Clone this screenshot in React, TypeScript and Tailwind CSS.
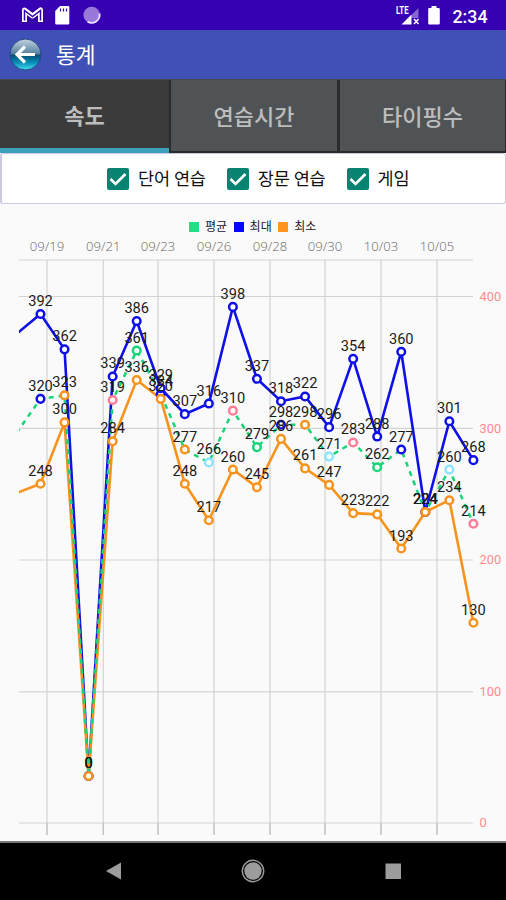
import React from "react";

const FONT = "font-['Roboto','Noto_Sans_CJK_KR',sans-serif]";
const GREEN = "#18d477";
const BLUE = "#0f0fe8";
const ORANGE = "#f7931c";
const PINK = "#fd7c96";
const CYAN = "#8ce4fd";

const MAX = [392, 362, 0, 339, 386, 329, 307, 316, 398, 337, 318, 322, 296, 354, 288, 360, 224, 301, 268];
const AVG = [320, 323, 0, 319, 361, 324, 277, 266, 310, 279, 298, 298, 271, 283, 262, 277, 224, 260, 214];
const MIN = [248, 300, 0, 284, 336, 320, 248, 217, 260, 245, 286, 261, 247, 223, 222, 193, 224, 234, 130];
const AVG_DOTS = [BLUE, ORANGE, CYAN, PINK, "#18d477"];

const DATES: [number, string][] = [
  [47, "09/19"], [103.3, "09/21"], [158, "09/23"], [214, "09/26"],
  [270, "09/28"], [325, "09/30"], [381, "10/03"], [437, "10/05"],
];
const LEVELS: [number, string][] = [[296.5, "400"], [428.3, "300"], [560, "200"], [691.8, "100"], [823, "0"]];

const px = (i: number) => 40.5 + i * 24.05;
const py = (v: number) => 776 - v * 1.1786;
const line = (data: number[], start: number) =>
  `16.5,${start} ` + data.map((v, i) => `${px(i)},${py(v)}`).join(" ");

function Series({ data, start, color, dashed }: { data: number[]; start: number; color: string; dashed?: boolean }) {
  return (
    <polyline
      points={line(data, start)}
      fill="none"
      stroke={color}
      strokeWidth={dashed ? 2.5 : 2.6}
      strokeDasharray={dashed ? "5 5" : undefined}
    />
  );
}

function Dots({ data, colors }: { data: number[]; colors: string[] }) {
  return (
    <g fill="#fff" strokeWidth="2.5">
      {data.map((v, i) => (
        <circle key={i} cx={px(i)} cy={py(v)} r="3.8" stroke={colors[i % colors.length]} />
      ))}
    </g>
  );
}

function Values({ data }: { data: number[] }) {
  return (
    <g fill="#1a1a1a" fontSize="14.6" textAnchor="middle">
      {data.map((v, i) => (
        <text key={i} x={px(i)} y={py(v) - 8}>{v}</text>
      ))}
    </g>
  );
}

function Chart() {
  return (
    <svg width="506" height="603" viewBox="0 238 506 603" className="block">
      <defs>
        <clipPath id="plot"><rect x="19" y="250" width="465" height="590" /></clipPath>
      </defs>
      <g stroke="#d3d3d3" strokeWidth="1.2">
        <line x1="19" x2="473" y1="260" y2="260" />
        {LEVELS.map(([y]) => <line key={y} x1="19" x2="473" y1={y} y2={y} />)}
        {DATES.map(([x]) => <line key={x} x1={x} x2={x} y1="260" y2="835" />)}
      </g>
      <g stroke="#c2c2c2" strokeWidth="1.2">
        {DATES.map(([x]) => <line key={x} x1={x} x2={x} y1="823" y2="835" />)}
      </g>
      <g fill="#666" fontSize="13.4" fontWeight="300" textAnchor="middle" className="font-['Open_Sans',sans-serif]">
        {DATES.map(([x, label]) => (
          <text key={label} x={x} y="251.3" textLength="34.5" lengthAdjust="spacingAndGlyphs">{label}</text>
        ))}
      </g>
      <g fill="#ff8a8a" fontSize="12.8">
        {LEVELS.map(([y, label]) => <text key={label} x="479.5" y={y + 4.3}>{label}</text>)}
      </g>
      <g clipPath="url(#plot)">
        <Series data={MAX} start={334} color={BLUE} />
        <Series data={MIN} start={493} color={ORANGE} />
        <Series data={AVG} start={433} color={GREEN} dashed />
      </g>
      <Dots data={AVG} colors={AVG_DOTS} />
      <Dots data={MAX} colors={[BLUE]} />
      <Dots data={MIN} colors={[ORANGE]} />
      <Values data={AVG} />
      <Values data={MAX} />
      <Values data={MIN} />
    </svg>
  );
}

function StatusBar() {
  return (
    <div className="flex h-[30px] items-center bg-[#3700b3]">
      <svg width="506" height="30" viewBox="0 0 506 30" fill="#fff">
        <path d="M24.500 22V10l8 6 8-6v12" fill="none" stroke="#fff" strokeWidth="5" strokeLinejoin="round" />
        <path d="M24.500 20.500V10.500l8 6 8-6v10" fill="none" stroke="#3700b3" strokeWidth="1.500" />
        <path d="M60 6h8q1.300 0 1.300 1.300v16q0 1.300-1.300 1.300H56.500q-1.300 0-1.300-1.300V11z" />
        <path d="M60.500 8.500v3M63.500 8.500v3M66.500 8.500v3" stroke="#3700b3" strokeWidth="1.200" />
        <circle cx="91.700" cy="15" r="8.300" fill="#9878d8" />
        <path d="M99.500 13.500a8 8 0 0 1-12 8.200" fill="none" stroke="#eee6fc" strokeWidth="1.800" />
        <text x="396" y="14" fontSize="10.500" fontWeight="700" textLength="12.500" lengthAdjust="spacingAndGlyphs">LTE</text>
        <path d="M418.500 8v10h-7v-3z" opacity=".4" />
        <path d="M411.500 14.500v10H401.500z" />
        <path d="m414 19 4.500 5m0-5-4.500 5" stroke="#fff" strokeWidth="1.500" />
        <path d="M431.500 6h5v2h2q1.300 0 1.300 1.300v14q0 1.300-1.300 1.300h-9q-1.300 0-1.300-1.300v-14q0-1.300 1.300-1.300h2z" />
        <text x="452.500" y="22.600" fontSize="19" fontWeight="500" textLength="35" lengthAdjust="spacingAndGlyphs">2:34</text>
      </svg>
    </div>
  );
}

function TitleBar() {
  return (
    <header className="flex h-[49px] items-center bg-[#3f51b5] pl-[9px] text-white">
      <svg width="33" height="33" viewBox="0 0 33 33">
        <defs>
          <linearGradient id="orb" x1="0" y1="0" x2="0" y2="1">
            <stop offset="0" stopColor="#c3d3df" />
            <stop offset=".48" stopColor="#5680a0" />
            <stop offset=".52" stopColor="#075077" />
            <stop offset=".75" stopColor="#078bb5" />
            <stop offset="1" stopColor="#44dcee" />
          </linearGradient>
        </defs>
        <circle cx="16.500" cy="16.500" r="15.500" fill="url(#orb)" stroke="#254783" strokeWidth="1" />
        <path d="M26 16.500H8M16 8.500 8 16.500l8 8" fill="none" stroke="#fff" strokeWidth="3.200" />
      </svg>
      <h1 className="ml-[14px] pt-[3px] text-[21.5px] leading-none">통계</h1>
    </header>
  );
}

function Tabs() {
  return (
    <nav className="flex h-[74px] border-t border-[#44474b] bg-[#292b2c] text-[22px] leading-none text-[#bdbdbd]">
      <button className="flex w-[169px] items-center justify-center border-b-[5px] border-[#3ba1bd] bg-[#3b3b3b] pt-[6px] font-bold">속도</button>
      <button className="mb-[2px] ml-[2px] flex w-[166px] items-center justify-center bg-[#505355] pt-[4px] font-medium">연습시간</button>
      <button className="mb-[2px] ml-[3px] flex w-[165px] items-center justify-center bg-[#505355] pt-[4px] font-medium">타이핑수</button>
    </nav>
  );
}

function Check({ label }: { label: string }) {
  return (
    <label className="flex items-center gap-[9px]">
      <svg width="22" height="22" viewBox="0 0 22 22">
        <rect width="22" height="22" rx="2" fill="#078372" />
        <path d="m3.500 11 5 5L18.500 6" fill="none" stroke="#fff" strokeWidth="2.600" />
      </svg>
      <span className="whitespace-nowrap pt-[2px] text-[17.5px] leading-none tracking-[-0.2px]">{label}</span>
    </label>
  );
}

const LEGEND: [string, string][] = [["평균", "#1ce286"], ["최대", "#0808f8"], ["최소", "#ff951e"]];

export default function App() {
  return (
    <div className={`flex h-[900px] w-[506px] flex-col overflow-hidden bg-[#fafafa] ${FONT}`}>
      <StatusBar />
      <TitleBar />
      <Tabs />
      <section className="flex h-[51px] items-center gap-[21px] rounded-[3px] border border-l-2 border-[#c9cae0] bg-white pl-[105px] text-[#111]">
        <Check label="단어 연습" />
        <Check label="장문 연습" />
        <Check label="게임" />
      </section>
      <div className="flex h-[34px] items-end gap-[6.5px] pb-[5px] pl-[189px] text-[12px] leading-none text-[#222]">
        {LEGEND.map(([label, color]) => (
          <span key={label} className="flex items-center gap-[6px]">
            <svg width="10" height="10"><rect width="10" height="10" fill={color} /></svg>
            {label}
          </span>
        ))}
      </div>
      <Chart />
      <footer className="h-[59px] border-t-2 border-[#777] bg-black">
        <svg width="506" height="57" viewBox="0 843 506 57" fill="#9c9c9c">
          <path d="M106 871l15-8.500v17z" />
          <circle cx="253" cy="871" r="8.700" />
          <circle cx="253" cy="871" r="10.700" fill="none" stroke="#9c9c9c" strokeWidth="1.400" />
          <rect x="385.500" y="863.500" width="15.500" height="15.500" />
        </svg>
      </footer>
    </div>
  );
}
